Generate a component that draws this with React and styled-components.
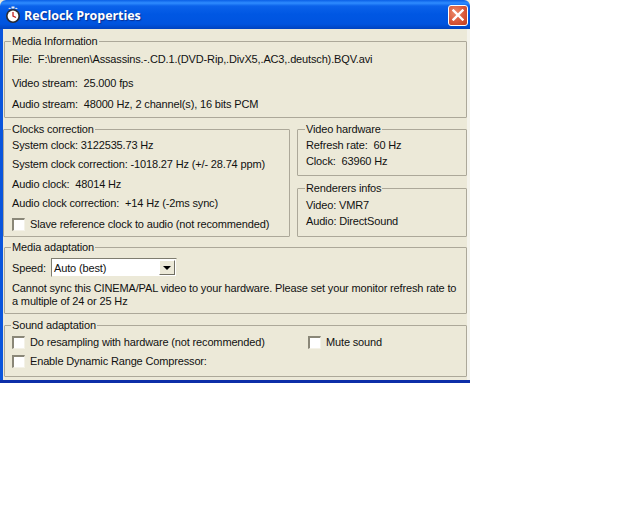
import styled, { createGlobalStyle } from "styled-components";

const Global = createGlobalStyle`
  html, body { margin: 0; padding: 0; background: #fff; }
  body {
    font-family: "Liberation Sans", Arial, sans-serif;
    font-size: 11px;
    letter-spacing: -0.15px;
    color: #111;
  }
`;

const Window = styled.div`
  width: 470px;
  height: 383px;
  box-sizing: border-box;
  background: #ece9d8;
  display: flex;
  flex-direction: column;
  border-bottom: 3px solid #0d2fa8;
`;

const TitleBar = styled.div`
  height: 29px;
  flex: none;
  box-sizing: border-box;
  display: flex;
  align-items: center;
  padding: 1px 2px 0 5px;
  border-radius: 6px 6px 0 0;
  background: linear-gradient(
    180deg,
    #0a5fe6 0,
    #2f8cff 3px,
    #0b62ea 6px,
    #0057e3 14px,
    #0054df 24px,
    #0043bf 29px
  );
`;

const Title = styled.div`
  margin-left: 3px;
  flex: 1;
  font-family: "Open Sans", sans-serif;
  font-weight: 700;
  font-size: 12.5px;
  letter-spacing: -0.05px;
  color: #fff;
  text-shadow: 1px 1px 1px #0a2f90;
`;

const CloseButton = styled.div`
  width: 20px;
  height: 21px;
  box-sizing: border-box;
  border: 1px solid #fff;
  border-radius: 3px;
  background: radial-gradient(circle at 35% 35%, #ec8a6a 0, #d9583a 55%, #c23c1e 100%);
  display: flex;
  align-items: center;
  justify-content: center;
`;

const Body = styled.div`
  flex: 1;
  display: flex;
  flex-direction: column;
  padding: 5px 0 0 1px;
  border-left: 3px solid #0a55dc;
  border-right: 3px solid #f4f3ec;
  box-sizing: border-box;
`;

const Group = styled.fieldset`
  box-sizing: border-box;
  margin: ${(p) => p.$top || 0}px 0 0 0;
  padding: 0 ${(p) => p.$pad || 7}px;
  min-width: 0;
  height: ${(p) => p.$h}px;
  border: 1px solid #aca899;
  border-radius: 1px;
`;

const Legend = styled.legend`
  margin-left: -1px;
  padding: 0 1px;
  height: 14px;
  line-height: 14px;
`;

const Row = styled.div`
  height: 14px;
  line-height: 14px;
  margin-top: ${(p) => p.$top || 0}px;
  white-space: pre;
  display: flex;
  align-items: center;
`;

const Columns = styled.div`
  display: flex;
  gap: 7px;
  margin-top: 4px;
  margin-left: -1px;
`;

const LeftColumn = styled.div`
  width: 287px;
  flex: none;
`;

const RightColumn = styled.div`
  flex: 1;
  min-width: 0;
`;

const CheckField = styled.label`
  display: flex;
  align-items: center;
  width: ${(p) => (p.$w ? `${p.$w}px` : "auto")};
  flex: none;
`;

const Box = styled.span`
  width: 13px;
  height: 13px;
  box-sizing: border-box;
  flex: none;
  background: #fff;
  border-style: solid;
  border-width: 2px 1px 1px 2px;
  border-color: #8a8778 #f4f2e8 #f4f2e8 #8a8778;
  margin-right: 5px;
`;

const SpeedRow = styled.div`
  display: flex;
  align-items: center;
  margin-top: 4px;
  height: 19px;
`;

const SpeedLabel = styled.span`
  width: 39px;
  flex: none;
`;

const Select = styled.div`
  width: 126px;
  height: 19px;
  box-sizing: border-box;
  background: #fff;
  border-style: solid;
  border-width: 1px;
  border-color: #7f7d70 #ece9d8 #ece9d8 #7f7d70;
  display: flex;
  align-items: center;
  padding-left: 2px;
`;

const SelectText = styled.span`
  flex: 1;
`;

const SelectArrow = styled.span`
  width: 16px;
  height: 15px;
  margin-right: 1px;
  box-sizing: border-box;
  background: #ece9d8;
  border-style: solid;
  border-width: 1px;
  border-color: #fff #716f64 #716f64 #fff;
  display: flex;
  align-items: center;
  justify-content: center;

  &::after {
    content: "";
    border-style: solid;
    border-width: 4px 4px 0 4px;
    border-color: #000 transparent transparent transparent;
  }
`;

const ClockIcon = () => (
  <svg width="16" height="18" viewBox="0 0 16 18">
    <path d="M3 3 L5 1.5 L6 3 Z M13 3 L11 1.5 L10 3 Z" fill="#e8e8e8" />
    <rect x="6.5" y="0.5" width="3" height="2" fill="#f0f0f0" />
    <circle cx="8" cy="10" r="7" fill="#2a2a30" />
    <circle cx="8" cy="10" r="5.4" fill="#fff" />
    <path d="M8 6 V10 L11 11.5" fill="none" stroke="#c22020" strokeWidth="1.3" />
  </svg>
);

const CloseIcon = () => (
  <svg width="12" height="12" viewBox="0 0 12 12">
    <path d="M1.5 1.5 L10.5 10.5 M10.5 1.5 L1.5 10.5" stroke="#fff" strokeWidth="2.4" strokeLinecap="square" />
  </svg>
);

export default function App() {
  return (
    <>
      <Global />
      <Window>
        <TitleBar>
          <ClockIcon />
          <Title>ReClock Properties</Title>
          <CloseButton>
            <CloseIcon />
          </CloseButton>
        </TitleBar>
        <Body>
          <Group $h={84}>
            <Legend>Media Information</Legend>
            <Row $top={4}>File:  F:\brennen\Assassins.-.CD.1.(DVD-Rip,.DivX5,.AC3,.deutsch).BQV.avi</Row>
            <Row $top={10}>Video stream:  25.000 fps</Row>
            <Row $top={7}>Audio stream:  48000 Hz, 2 channel(s), 16 bits PCM</Row>
          </Group>
          <Columns>
            <LeftColumn>
              <Group $h={115} $pad={8}>
                <Legend>Clocks correction</Legend>
                <Row $top={2}>System clock: 3122535.73 Hz</Row>
                <Row $top={5}>System clock correction: -1018.27 Hz (+/- 28.74 ppm)</Row>
                <Row $top={6}>Audio clock:  48014 Hz</Row>
                <Row $top={5}>Audio clock correction:  +14 Hz (-2ms sync)</Row>
                <Row $top={7}>
                  <CheckField>
                    <Box />
                    Slave reference clock to audio (not recommended)
                  </CheckField>
                </Row>
              </Group>
            </LeftColumn>
            <RightColumn>
              <Group $h={54} $pad={8}>
                <Legend>Video hardware</Legend>
                <Row $top={2}>Refresh rate:  60 Hz</Row>
                <Row $top={2}>Clock:  63960 Hz</Row>
              </Group>
              <Group $h={56} $top={5} $pad={8}>
                <Legend>Renderers infos</Legend>
                <Row $top={3}>Video: VMR7</Row>
                <Row $top={2}>Audio: DirectSound</Row>
              </Group>
            </RightColumn>
          </Columns>
          <Group $h={74} $top={3}>
            <Legend>Media adaptation</Legend>
            <SpeedRow>
              <SpeedLabel>Speed:</SpeedLabel>
              <Select>
                <SelectText>Auto (best)</SelectText>
                <SelectArrow />
              </Select>
            </SpeedRow>
            <Row $top={4}>Cannot sync this CINEMA/PAL video to your hardware. Please set your monitor refresh rate to</Row>
            <Row $top={-1}>a multiple of 24 or 25 Hz</Row>
          </Group>
          <Group $h={59} $top={4}>
            <Legend>Sound adaptation</Legend>
            <Row $top={3}>
              <CheckField $w={296}>
                <Box />
                Do resampling with hardware (not recommended)
              </CheckField>
              <CheckField>
                <Box />
                Mute sound
              </CheckField>
            </Row>
            <Row $top={5}>
              <CheckField>
                <Box />
                Enable Dynamic Range Compressor:
              </CheckField>
            </Row>
          </Group>
        </Body>
      </Window>
    </>
  );
}
